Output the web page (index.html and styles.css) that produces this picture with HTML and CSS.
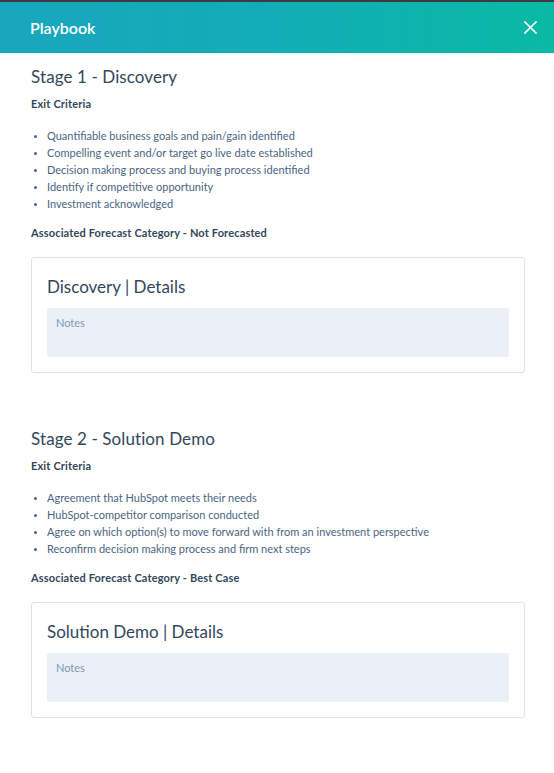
FILE: index.html
```html
<!DOCTYPE html>
<html>
<head>
<meta charset="utf-8">
<link rel="stylesheet" href="styles.css">
</head>
<body>
<div class="panel">
  <header class="header">
    <h1 class="header-title">Playbook</h1>
    <button class="close" aria-label="Close">
      <svg width="13" height="13" viewBox="0 0 13 13"><path d="M1 1 L12 12 M12 1 L1 12" stroke="#fff" stroke-width="1.6" fill="none" stroke-linecap="square"/></svg>
    </button>
  </header>
  <main class="content">
    <section class="stage">
      <h2 class="stage-title">Stage 1 - Discovery</h2>
      <h3 class="label">Exit Criteria</h3>
      <ul class="criteria">
        <li>Quantifiable business goals and pain/gain identified</li>
        <li>Compelling event and/or target go live date established</li>
        <li>Decision making process and buying process identified</li>
        <li>Identify if competitive opportunity</li>
        <li>Investment acknowledged</li>
      </ul>
      <h3 class="label forecast">Associated Forecast Category - Not Forecasted</h3>
      <div class="card">
        <h4 class="card-title">Discovery | Details</h4>
        <div class="notes">Notes</div>
      </div>
    </section>
    <section class="stage stage-2">
      <h2 class="stage-title">Stage 2 - Solution Demo</h2>
      <h3 class="label">Exit Criteria</h3>
      <ul class="criteria">
        <li>Agreement that HubSpot meets their needs</li>
        <li>HubSpot-competitor comparison conducted</li>
        <li>Agree on which option(s) to move forward with from an investment perspective</li>
        <li>Reconfirm decision making process and firm next steps</li>
      </ul>
      <h3 class="label forecast">Associated Forecast Category - Best Case</h3>
      <div class="card">
        <h4 class="card-title">Solution Demo | Details</h4>
        <div class="notes">Notes</div>
      </div>
    </section>
  </main>
</div>
</body>
</html>
```

FILE: styles.css
```css
* { box-sizing: border-box; }
html, body {
  margin: 0;
  padding: 0;
  background: #fff;
}
body {
  font-family: Lato, "Open Sans", sans-serif;
  color: #33475b;
}
.panel {
  border-top: 2px solid #3b3c40;
}
.header {
  height: 51px;
  display: flex;
  align-items: center;
  justify-content: space-between;
  padding: 0 17px 0 30px;
  background: linear-gradient(90deg, #19a6bd 0%, #12adb6 50%, #0ab9a3 100%);
}
.header-title {
  margin: 0;
  font-size: 16px;
  font-weight: 600;
  color: #fff;
  line-height: 20px;
}
.close {
  background: none;
  border: 0;
  padding: 0;
  width: 13px;
  height: 13px;
  display: flex;
}
.content {
  padding: 14px 29px 40px 31px;
}
.stage-2 {
  margin-top: 56px;
}
.stage-title {
  margin: 0;
  font-size: 17px;
  font-weight: 400;
  line-height: 20px;
  letter-spacing: 0.1px;
}
.label {
  margin: 10px 0 0;
  font-size: 11px;
  font-weight: 700;
  line-height: 14px;
  letter-spacing: 0.15px;
}
.criteria {
  margin: 16px 0 0;
  padding: 0 0 0 16px;
  font-size: 11px;
  line-height: 17px;
  color: #4a6582;
}
.criteria li { padding-left: 0; }
.criteria li::marker { font-size: 9px; }
.forecast {
  margin-top: 14px;
}
.card {
  margin-top: 17px;
  border: 1px solid #dfe3eb;
  border-radius: 3px;
  padding: 18px 15px 15px;
}
.card-title {
  margin: 0;
  font-size: 17px;
  font-weight: 400;
  line-height: 22px;
}
.notes {
  margin-top: 10px;
  height: 49px;
  background: #eaf0f6;
  border-radius: 3px;
  padding: 8px 9px;
  font-size: 11px;
  line-height: 14px;
  color: #7c98b6;
}
```
